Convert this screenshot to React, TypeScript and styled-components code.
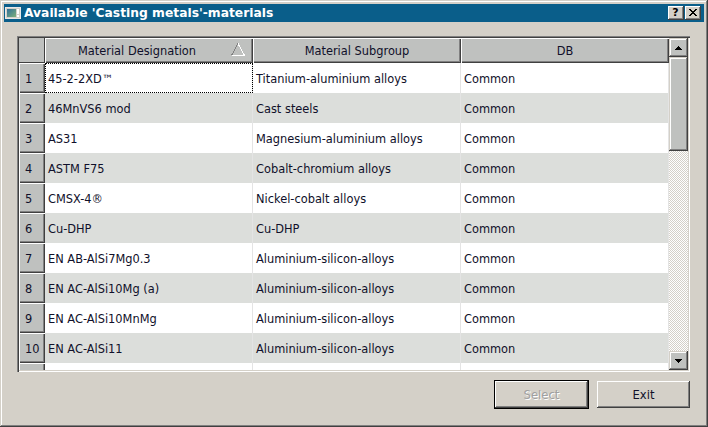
import React from 'react';
import styled, { createGlobalStyle } from 'styled-components';

const Global = createGlobalStyle`
  html, body { margin: 0; padding: 0; background: #d4d0c8; }
  body { font-family: "DejaVu Sans", Tahoma, sans-serif; }
  * { box-sizing: border-box; }
`;

const Window = styled.div`
  width: 708px;
  height: 427px;
  padding: 4px;
  background: #d4d0c8;
  box-shadow: inset -1px -1px #404040, inset 1px 1px #d4d0c8, inset -2px -2px #808080, inset 2px 2px #ffffff;
  display: flex;
  flex-direction: column;
`;

const TitleBar = styled.div`
  height: 18px;
  background: #0a5e8a;
  display: flex;
  align-items: center;
  padding: 0 3px 0 1px;
`;

const TitleIcon = styled.svg`
  width: 16px;
  height: 16px;
  margin-right: 3px;
  flex: none;
`;

const TitleText = styled.span`
  color: #ffffff;
  font-weight: bold;
  font-size: 12.3px;
  white-space: nowrap;
`;

const TitleButtons = styled.div`
  margin-left: auto;
  display: flex;
  gap: 1px;
`;

const CaptionButton = styled.div`
  width: 16px;
  height: 14px;
  background: #d4d0c8;
  box-shadow: inset -1px -1px #404040, inset 1px 1px #ffffff, inset -2px -2px #808080;
  display: flex;
  align-items: center;
  justify-content: center;
  font-family: "DejaVu Sans", sans-serif;
  font-weight: bold;
  font-size: 11px;
  color: #000;
  line-height: 1;
  padding: 0 1px 1px 0;
`;

const Body = styled.div`
  flex: 1;
  display: flex;
  flex-direction: column;
  padding: 14px 14px 0 13px;
`;

const GridFrame = styled.div`
  height: 336px;
  padding: 2px;
  display: flex;
  background: #ffffff;
  box-shadow: inset 1px 1px #808080, inset 2px 2px #404040, inset -1px -1px #ffffff, inset -2px -2px #d4d0c8;
`;

const Table = styled.div`
  flex: 1;
  display: flex;
  flex-direction: column;
  overflow: hidden;
`;

const HeaderRow = styled.div`
  display: grid;
  grid-template-columns: 26px repeat(3, 208px);
  height: 25px;
  flex: none;
`;

const Corner = styled.div`
  background: #bfc1bf;
  box-shadow: inset -1px 0 #404040, inset 0 -1px #404040;
`;

const HeaderCell = styled.div<{ $sorted?: boolean }>`
  position: relative;
  background: #bfc1bf;
  box-shadow: inset 1px 1px #ffffff, inset -1px -1px #404040, inset -2px -2px #808080;
  display: flex;
  align-items: center;
  justify-content: center;
  padding-right: ${p => (p.$sorted ? '24px' : '0')};
  padding-top: 1px;
  font-size: 11.4px;
  color: #10102a;
  white-space: nowrap;
`;

const SortArrow = styled.svg`
  position: absolute;
  right: 8px;
  top: 5px;
  width: 14px;
  height: 13px;
`;

const Row = styled.div<{ $alt: boolean }>`
  display: grid;
  grid-template-columns: 26px repeat(3, 208px);
  height: 30px;
  flex: none;
  background: ${p => (p.$alt ? '#dcdedb' : '#ffffff')};
`;

const RowHeader = styled.div`
  background: #bfc1bf;
  box-shadow: inset 1px 1px #ffffff, inset -1px -1px #404040, inset -2px -2px #808080;
  display: flex;
  align-items: center;
  padding: 1px 0 0 6px;
  font-size: 11.4px;
  color: #10102a;
`;

const Cell = styled.div<{ $focus?: boolean }>`
  display: flex;
  align-items: center;
  padding: 1px 0 0 3px;
  font-size: 11.4px;
  color: #10102a;
  white-space: nowrap;
  overflow: hidden;
  border-right: 1px solid #e4e4e4;
  outline: ${p => (p.$focus ? '1px dotted #000' : 'none')};
  outline-offset: -1px;
`;

const ScrollBar = styled.div`
  width: 19px;
  flex: none;
  display: flex;
  flex-direction: column;
`;

const ScrollButton = styled.div`
  height: 19px;
  flex: none;
  background: #bfc1bf;
  box-shadow: inset -1px -1px #404040, inset 1px 1px #d4d0c8, inset -2px -2px #808080, inset 2px 2px #ffffff;
  display: flex;
  align-items: center;
  justify-content: center;
`;

const Thumb = styled.div`
  height: 94px;
  flex: none;
  background: #bfc1bf;
  box-shadow: inset -1px -1px #404040, inset 1px 1px #d4d0c8, inset -2px -2px #808080, inset 2px 2px #ffffff;
`;

const Track = styled.div`
  flex: 1;
  background: repeating-conic-gradient(#ffffff 0 25%, #d4d0c8 0 50%) 0 0 / 2px 2px;
`;

const ButtonRow = styled.div`
  display: flex;
  justify-content: flex-end;
  align-items: center;
  gap: 8px;
  margin-top: 8px;
`;

const Button = styled.div<{ $default?: boolean; $disabled?: boolean }>`
  width: ${p => (p.$default ? '95px' : '93px')};
  height: ${p => (p.$default ? '29px' : '27px')};
  background: #d4d0c8;
  border: ${p => (p.$default ? '1px solid #000' : 'none')};
  box-shadow: inset -1px -1px #404040, inset 1px 1px #ffffff, inset -2px -2px #808080;
  display: flex;
  align-items: center;
  justify-content: center;
  padding-top: 1px;
  font-size: 11.6px;
  color: ${p => (p.$disabled ? '#a0a0a0' : '#10102a')};
  text-shadow: ${p => (p.$disabled ? '1px 1px #ffffff' : 'none')};
`;

const rows: [string, string, string][] = [
  ['45-2-2XD™', 'Titanium-aluminium alloys', 'Common'],
  ['46MnVS6 mod', 'Cast steels', 'Common'],
  ['AS31', 'Magnesium-aluminium alloys', 'Common'],
  ['ASTM F75', 'Cobalt-chromium alloys', 'Common'],
  ['CMSX-4®', 'Nickel-cobalt alloys', 'Common'],
  ['Cu-DHP', 'Cu-DHP', 'Common'],
  ['EN AB-AlSi7Mg0.3', 'Aluminium-silicon-alloys', 'Common'],
  ['EN AC-AlSi10Mg (a)', 'Aluminium-silicon-alloys', 'Common'],
  ['EN AC-AlSi10MnMg', 'Aluminium-silicon-alloys', 'Common'],
  ['EN AC-AlSi11', 'Aluminium-silicon-alloys', 'Common'],
];

const Arrow = ({ up }: { up: boolean }) => (
  <svg width="7" height="4" viewBox="0 0 7 4" shapeRendering="crispEdges">
    {up ? (
      <>
        <rect x="3" y="0" width="1" height="1" fill="#000" />
        <rect x="2" y="1" width="3" height="1" fill="#000" />
        <rect x="1" y="2" width="5" height="1" fill="#000" />
        <rect x="0" y="3" width="7" height="1" fill="#000" />
      </>
    ) : (
      <>
        <rect x="0" y="0" width="7" height="1" fill="#000" />
        <rect x="1" y="1" width="5" height="1" fill="#000" />
        <rect x="2" y="2" width="3" height="1" fill="#000" />
        <rect x="3" y="3" width="1" height="1" fill="#000" />
      </>
    )}
  </svg>
);

export default function App() {
  return (
    <>
      <Global />
      <Window>
        <TitleBar>
          <TitleIcon viewBox="0 0 16 16" shapeRendering="crispEdges">
            <defs>
              <linearGradient id="ig" x1="0" y1="0" x2="1" y2="1">
                <stop offset="0" stopColor="#2f6f9a" />
                <stop offset="1" stopColor="#7fb07a" />
              </linearGradient>
            </defs>
            <rect x="0.5" y="2.5" width="15" height="11" fill="#d4d0c8" stroke="#e8e8e8" />
            <rect x="2" y="4" width="9" height="8" fill="url(#ig)" />
            <rect x="12" y="4" width="2" height="5" fill="#ffffff" />
            <rect x="12" y="10" width="2" height="2" fill="#ffffff" />
          </TitleIcon>
          <TitleText>Available 'Casting metals'-materials</TitleText>
          <TitleButtons>
            <CaptionButton>?</CaptionButton>
            <CaptionButton>
              <svg width="8" height="7" viewBox="0 0 8 7" shapeRendering="crispEdges">
                <path d="M0 0h2v1h-2zM6 0h2v1h-2zM1 1h2v1h-2zM5 1h2v1h-2zM2 2h4v1h-4zM3 3h2v1h-2zM2 4h4v1h-4zM1 5h2v1h-2zM5 5h2v1h-2zM0 6h2v1h-2zM6 6h2v1h-2z" fill="#000" />
              </svg>
            </CaptionButton>
          </TitleButtons>
        </TitleBar>
        <Body>
          <GridFrame>
            <Table>
              <HeaderRow>
                <Corner />
                <HeaderCell $sorted>
                  Material Designation
                  <SortArrow viewBox="0 0 14 13" shapeRendering="crispEdges">
                    <path d="M7 0.5 L0.5 12.5" stroke="#808080" fill="none" />
                    <path d="M7 0.5 L13.5 12.5 L0.5 12.5" stroke="#ffffff" fill="none" />
                  </SortArrow>
                </HeaderCell>
                <HeaderCell>Material Subgroup</HeaderCell>
                <HeaderCell>DB</HeaderCell>
              </HeaderRow>
              {rows.map((r, i) => (
                <Row key={i} $alt={i % 2 === 1}>
                  <RowHeader>{i + 1}</RowHeader>
                  <Cell $focus={i === 0}>{r[0]}</Cell>
                  <Cell>{r[1]}</Cell>
                  <Cell>{r[2]}</Cell>
                </Row>
              ))}
              <Row $alt={false}>
                <RowHeader />
                <Cell />
                <Cell />
                <Cell />
              </Row>
            </Table>
            <ScrollBar>
              <ScrollButton>
                <Arrow up />
              </ScrollButton>
              <Thumb />
              <Track />
              <ScrollButton>
                <Arrow up={false} />
              </ScrollButton>
            </ScrollBar>
          </GridFrame>
          <ButtonRow>
            <Button $default $disabled>Select</Button>
            <Button>Exit</Button>
          </ButtonRow>
        </Body>
      </Window>
    </>
  );
}
